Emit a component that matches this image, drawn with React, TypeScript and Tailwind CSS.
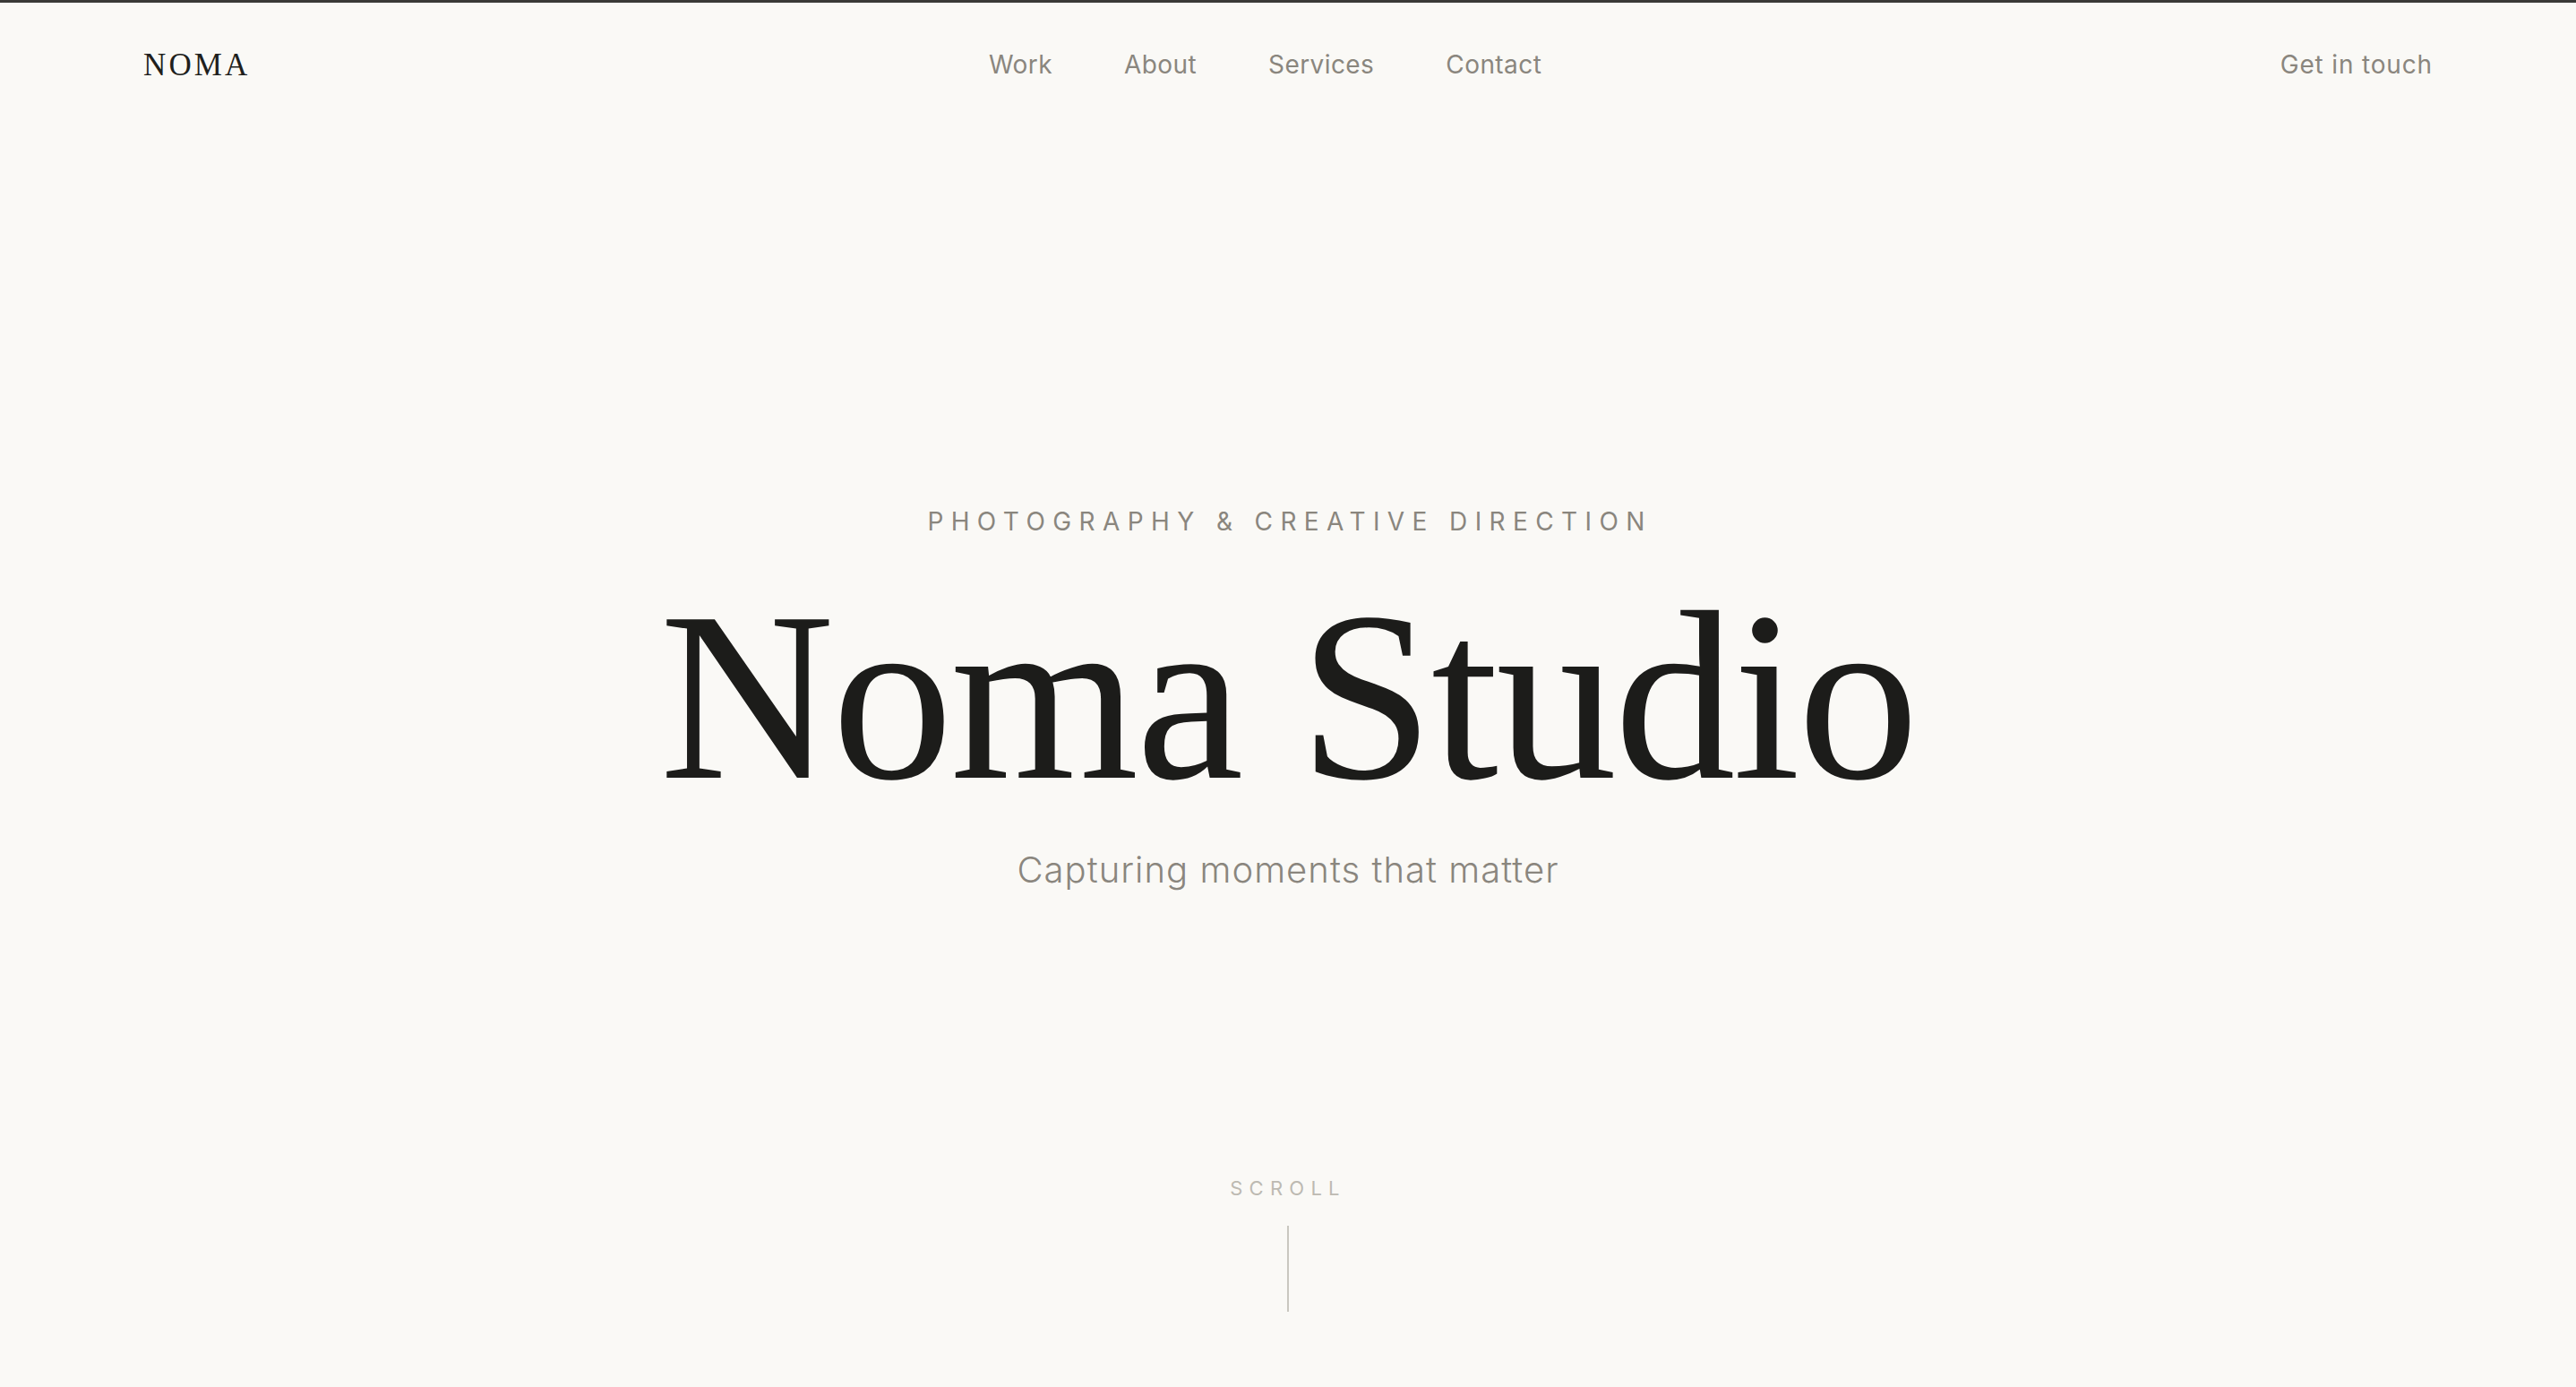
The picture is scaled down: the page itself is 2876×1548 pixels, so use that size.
export default function App() {
  const links = ["Work", "About", "Services", "Contact"];

  return (
    <div className="h-screen flex flex-col bg-[#faf9f6] font-['Inter',sans-serif] text-[#1c1c1a]">
      {/* top rule */}
      <div className="h-[3px] bg-[#3a3a37]" />

      {/* header */}
      <header className="h-[138px] px-[160px] flex items-center justify-between">
        <a className="font-['Liberation_Serif',serif] text-[35px] leading-none tracking-[0.09em] text-[#1f1f1d]">
          NOMA
        </a>
        <nav className="flex items-center gap-[80px]">
          {links.map((l) => (
            <a key={l} className="text-[28px] leading-none tracking-[0.015em] text-[#8a867e]">
              {l}
            </a>
          ))}
        </nav>
        <a className="text-[28px] leading-none tracking-[0.03em] text-[#8a867e]">Get in touch</a>
      </header>

      {/* hero */}
      <main className="flex-1 flex flex-col items-center justify-center pt-[111px]">
        <p className="text-[28px] leading-none tracking-[0.3em] text-[#8a867e] pl-[0.15em]">
          PHOTOGRAPHY &amp; CREATIVE DIRECTION
        </p>
        <h1 className="mt-[46px] font-['Liberation_Serif',serif] text-[270px] leading-none tracking-[-0.01em] text-[#1c1c1a]">
          Noma Studio
        </h1>
        <p className="mt-[35px] text-[40px] leading-[48px] font-light tracking-[0.026em] text-[#8a867e]">
          Capturing moments that matter
        </p>
      </main>

      {/* scroll indicator */}
      <div className="flex flex-col items-center pb-[84px]">
        <span className="text-[22px] leading-[30px] tracking-[0.33em] text-[#bdbab2]">SCROLL</span>
        <div className="mt-[27px] w-[2px] h-[96px] bg-[#c9c7c0]" />
      </div>
    </div>
  );
}
